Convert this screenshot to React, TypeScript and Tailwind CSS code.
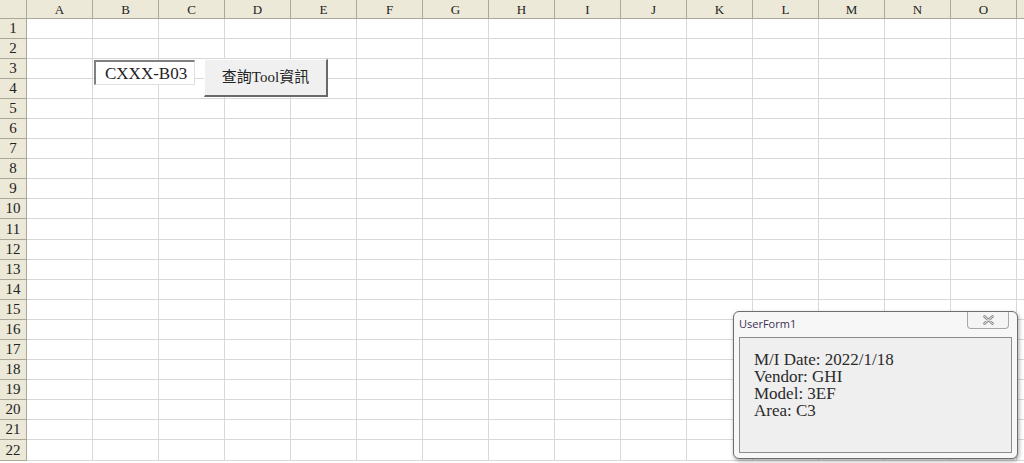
import React from "react";

const cols = ["A","B","C","D","E","F","G","H","I","J","K","L","M","N","O"];
const rows = Array.from({ length: 22 }, (_, i) => i + 1);

export default function App() {
  return (
    <div className="relative w-[1024px] h-[463px] overflow-hidden bg-white" style={{ fontFamily: '"Liberation Serif", serif' }}>
      {/* column header */}
      <div className="flex h-[19px]">
        <div className="w-[27px] shrink-0 bg-[#ece9d8] border-r border-b border-[#aca899]" />
        {cols.map((c) => (
          <div key={c} className="w-[66px] shrink-0 bg-[#ece9d8] border-r border-b border-[#aca899] flex items-center justify-center text-[13px] text-[#222] leading-none pt-[1px]">
            {c}
          </div>
        ))}
        <div className="flex-1 bg-[#ece9d8] border-b border-[#aca899]" />
      </div>
      {rows.map((r) => (
        <div key={r} className={r % 11 === 0 ? "flex h-[21px]" : "flex h-[20px]"}>
          <div className="w-[27px] shrink-0 bg-[#ece9d8] border-r border-b border-[#aca899] flex items-center justify-center text-[15px] text-[#222] leading-none">
            {r}
          </div>
          {cols.map((c) => (
            <div key={c} className="w-[66px] shrink-0 border-r border-b border-[#d8d8d8]" />
          ))}
          <div className="flex-1 border-b border-[#d8d8d8]" />
        </div>
      ))}

      {/* textbox */}
      <div className="absolute left-[94px] top-[60px] w-[101px] h-[25px] bg-white border-l-2 border-t-2 border-[#808080] border-r border-b border-r-[#e0e0e0] border-b-[#e0e0e0] flex items-center pl-[9px] text-[17px] text-[#222] leading-none">
        CXXX-B03
      </div>

      {/* button */}
      <div className="absolute left-[204px] top-[59px] w-[124px] h-[38px] bg-[#f0f0f0] border-t border-l border-[#ffffff] border-r-2 border-b-2 border-r-[#696969] border-b-[#696969] flex items-center justify-center text-[15px] text-[#222] leading-none" style={{ fontFamily: '"Liberation Serif", "Noto Sans CJK TC", serif' }}>
        查詢Tool資訊
      </div>

      {/* userform window */}
      <div className="absolute left-[733px] top-[311px] w-[285px] h-[148px] rounded-[6px] border border-[#6e6e6e] bg-[#f7f7f7] shadow-[1px_2px_4px_rgba(0,0,0,0.35)] flex flex-col">
        <div className="h-[25px] flex items-start justify-between pl-[5px] pr-[8px]">
          <span className="mt-[6px] text-[11px] text-[#3a2f55] leading-none" style={{ fontFamily: '"Open Sans", "Noto Sans", sans-serif' }}>UserForm1</span>
          <div className="w-[42px] h-[17px] rounded-b-[4px] border border-t-0 border-[#a8a8a8] bg-[#f4f4f4] flex items-center justify-center">
            <svg width="11" height="10" viewBox="0 0 11 10">
              <path d="M1.5 1.5 L9.5 8.5 M9.5 1.5 L1.5 8.5" stroke="#8a8a8a" strokeWidth="2.6" strokeLinecap="round" fill="none" />
              <path d="M1.5 1.5 L9.5 8.5 M9.5 1.5 L1.5 8.5" stroke="#f4f4f4" strokeWidth="0.9" strokeLinecap="round" fill="none" />
            </svg>
          </div>
        </div>
        <div className="mx-[5px] mb-[5px] flex-1 border border-[#8c8c8c] bg-[#efefef] pl-[14px] pt-[13px] text-[17px] leading-[17px] text-[#2a2a2a]">
          <div>M/I Date: 2022/1/18</div>
          <div>Vendor: GHI</div>
          <div>Model: 3EF</div>
          <div>Area: C3</div>
        </div>
      </div>
    </div>
  );
}
